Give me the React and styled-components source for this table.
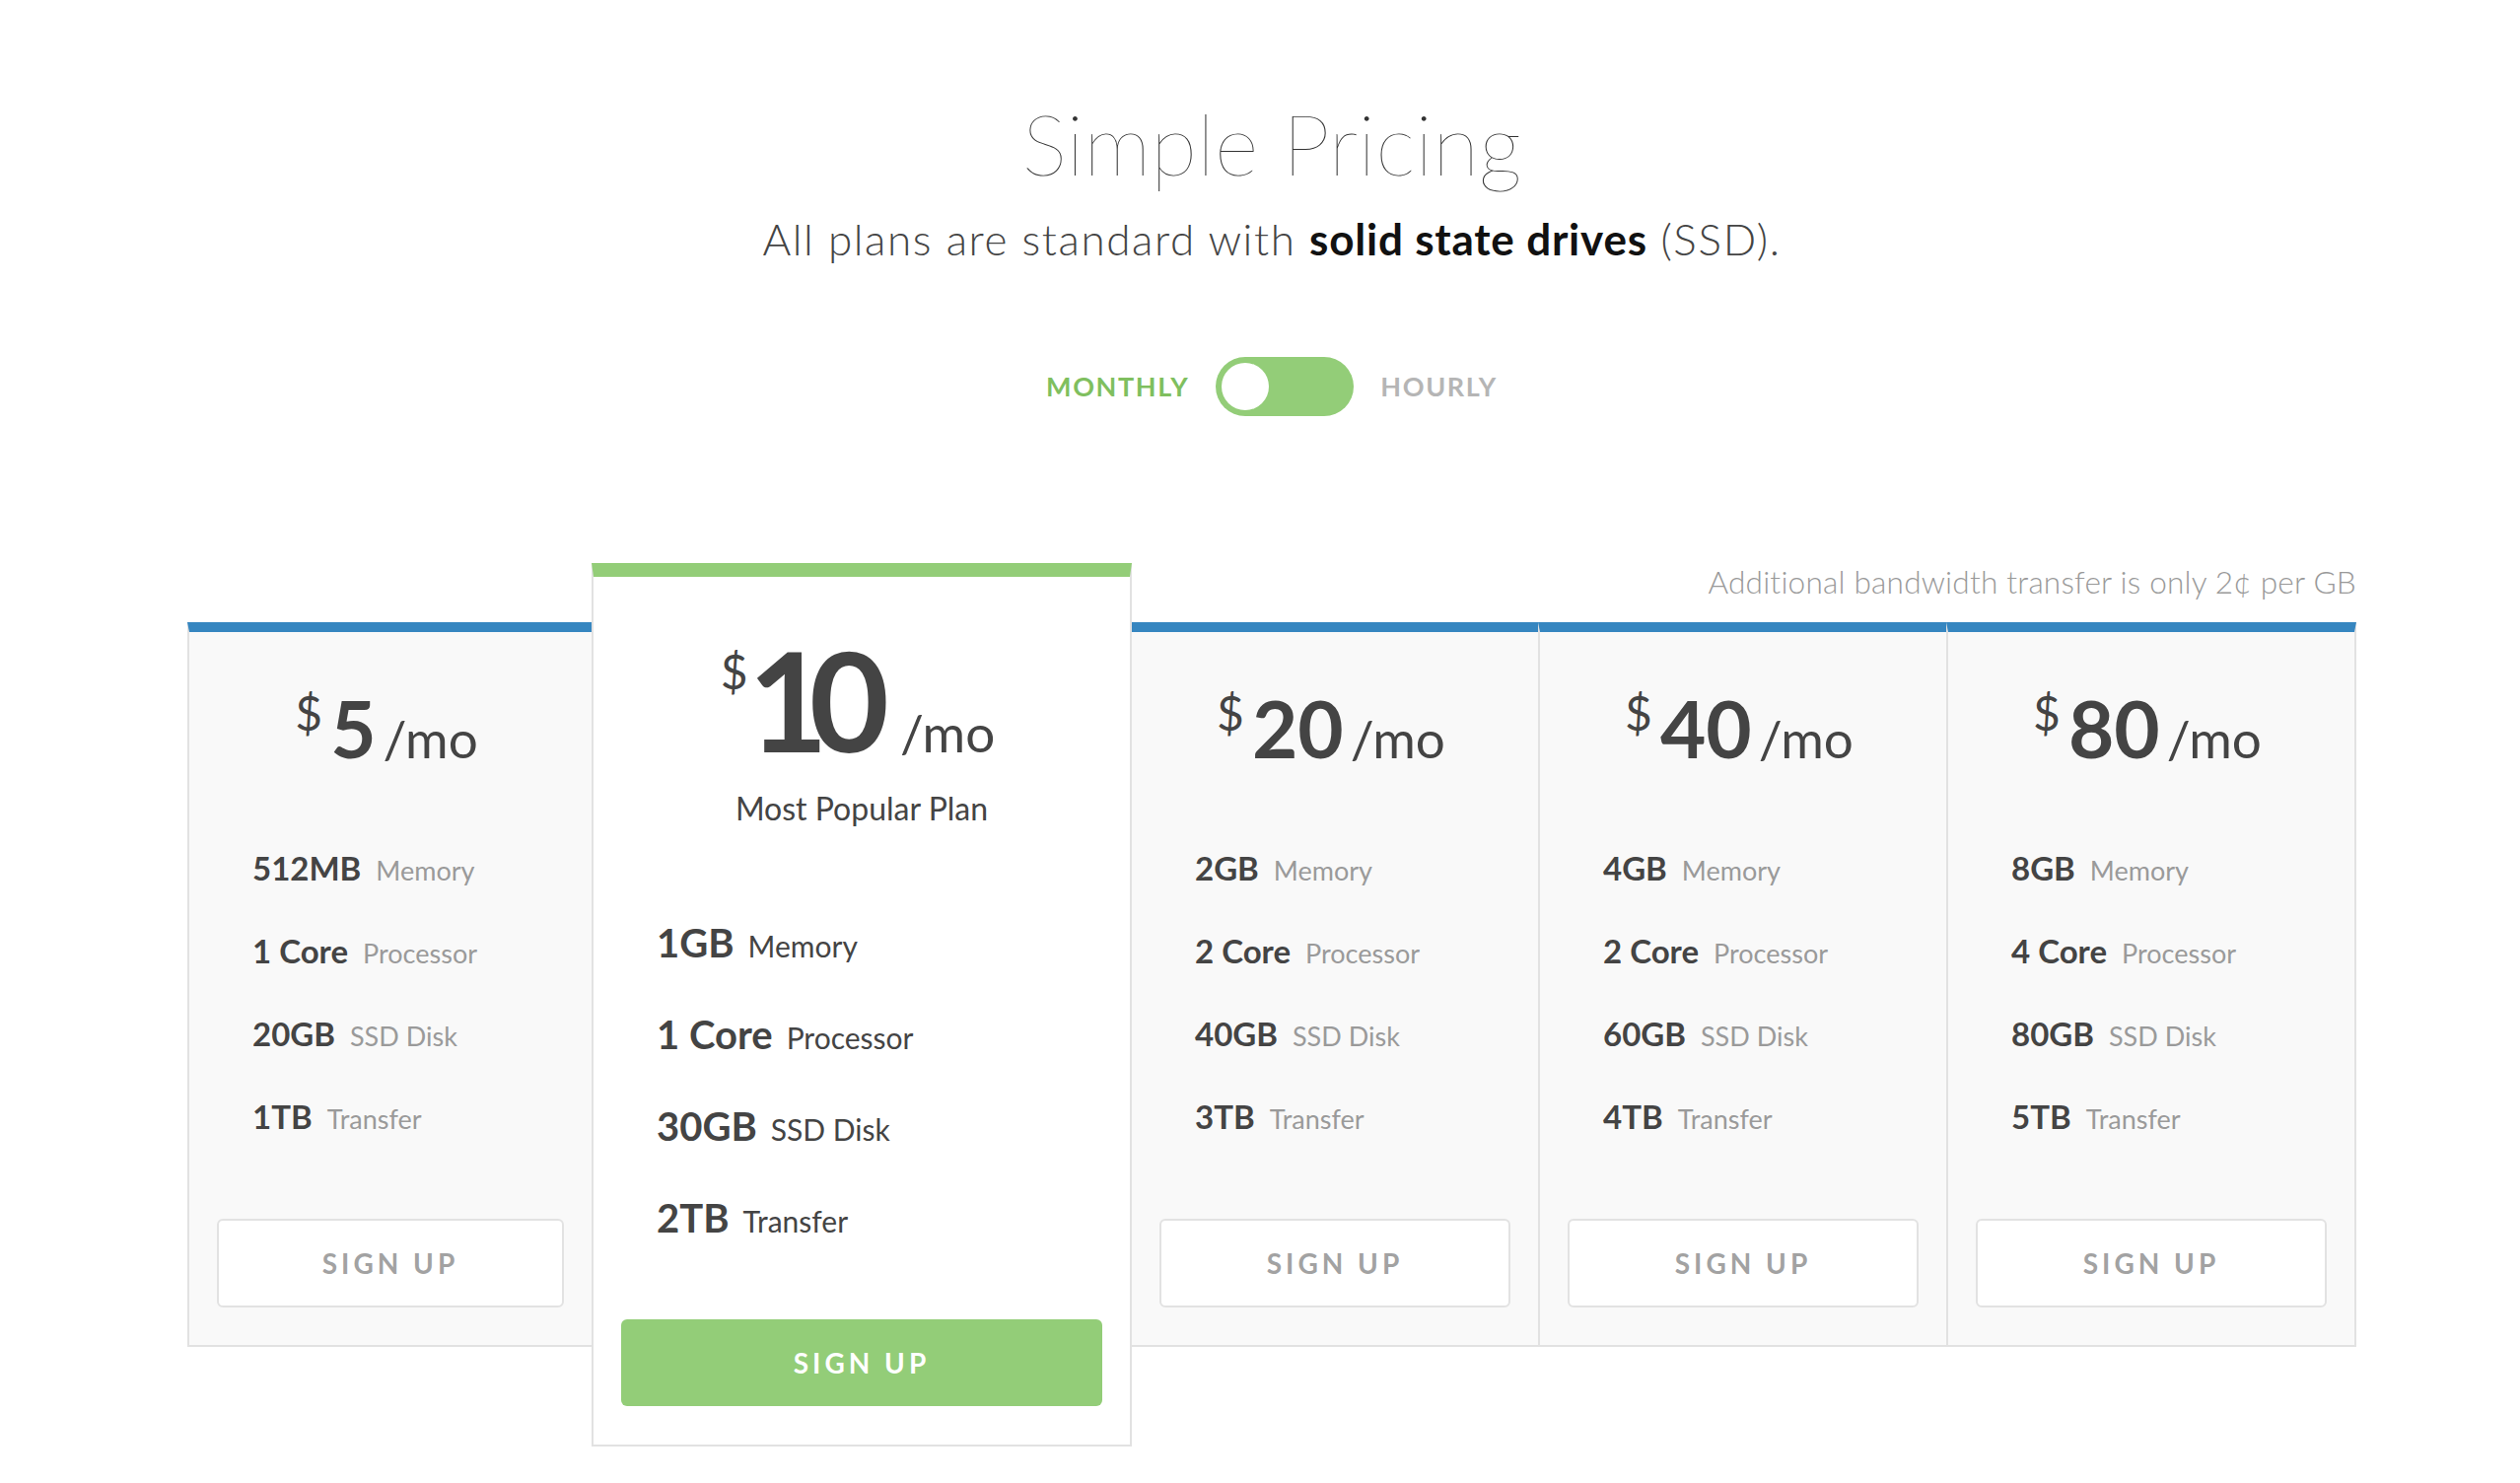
import React from "react";
import styled, { createGlobalStyle } from "styled-components";

const GlobalStyle = createGlobalStyle`
  html, body { margin: 0; padding: 0; background: #ffffff; }
  body { font-family: Lato, "Open Sans", "Liberation Sans", sans-serif; color: #444; }
  * { box-sizing: border-box; }
`;

const GREEN = "#93cd78";
const BLUE = "#3686c0";
const LINE = "#e2e2e2";

const Page = styled.main`
  width: 2200px;
  margin-left: 190px;
  padding-top: 93px;
  padding-bottom: 40px;
`;

const Header = styled.header`
  display: flex;
  flex-direction: column;
  align-items: center;
`;

const Title = styled.h1`
  margin: 0;
  font-size: 86px;
  font-weight: 200;
  line-height: 1.2;
  color: #333;
`;

const Subtitle = styled.p`
  margin: 20px 0 0;
  font-size: 44px;
  font-weight: 300;
  letter-spacing: 1.6px;
  line-height: 1.2;
  color: #444;
  strong { font-weight: 700; color: #111; letter-spacing: 0.8px; }
`;

const ToggleRow = styled.div`
  margin-top: 93px;
  display: flex;
  align-items: center;
  gap: 27px;
`;

const ToggleLabel = styled.span`
  font-size: 27px;
  font-weight: 700;
  letter-spacing: 1.6px;
  color: ${(p) => (p.$active ? "#7fbf5f" : "#b5b5b5")};
`;

const Switch = styled.div`
  width: 140px;
  height: 60px;
  border-radius: 30px;
  background: ${GREEN};
  padding: 6px;
  display: flex;
  justify-content: ${(p) => (p.$on ? "flex-end" : "flex-start")};
`;

const Knob = styled.div`
  width: 48px;
  height: 48px;
  border-radius: 50%;
  background: #fff;
`;

const Plans = styled.section`
  margin-top: 149px;
  display: flex;
  align-items: flex-start;
`;

const RightGroup = styled.div`
  flex: 1 1 0;
  display: flex;
  flex-direction: column;
`;

const Note = styled.div`
  height: 60px;
  padding-top: 1px;
  text-align: right;
  font-size: 31.6px;
  font-weight: 300;
  letter-spacing: 0.2px;
  line-height: 36px;
  color: #999;
`;

const CardsRow = styled.div`
  display: flex;
  align-items: flex-start;
`;

const Card = styled.article`
  flex: ${(p) => (p.$width ? `0 0 ${p.$width}px` : "1 1 0")};
  margin-top: ${(p) => p.$offset || 0}px;
  background: #f9f9f9;
  border-top: 10px solid ${BLUE};
  border-bottom: 2px solid ${LINE};
  border-left: ${(p) => (p.$leftLine ? `2px solid ${LINE}` : "none")};
  border-right: ${(p) => (p.$rightLine ? `2px solid ${LINE}` : "none")};
  padding: 0 28px 38px;
  display: flex;
  flex-direction: column;
`;

const PopularCard = styled.article`
  flex: 0 0 548px;
  background: #fff;
  border: 2px solid ${LINE};
  border-top: 14px solid ${GREEN};
  padding: 0 28px 39px;
  display: flex;
  flex-direction: column;
`;

const PriceRow = styled.div`
  margin-top: ${(p) => p.$top}px;
  padding-right: 8px;
  display: flex;
  justify-content: center;
  align-items: baseline;
  color: #444;
`;

const Currency = styled.span`
  align-self: flex-start;
  margin-top: ${(p) => p.$drop}px;
  margin-right: ${(p) => p.$gap}px;
  font-size: 48px;
  font-weight: 400;
  line-height: 1;
`;

const Amount = styled.span`
  font-size: ${(p) => p.$size}px;
  font-weight: 700;
  line-height: 1;
  letter-spacing: ${(p) => p.$tight || 0}px;
`;

const Period = styled.span`
  margin-left: ${(p) => p.$gap}px;
  font-size: 53px;
  font-weight: 400;
  line-height: 1;
`;

const Tagline = styled.p`
  margin: 22px 0 0;
  text-align: center;
  font-size: 32px;
  font-weight: 400;
  line-height: 1.2;
  color: #444;
`;

const Features = styled.ul`
  list-style: none;
  margin: ${(p) => p.$top}px 0 0;
  padding: 0 0 0 36px;
`;

const Feature = styled.li`
  font-size: ${(p) => (p.$popular ? 40 : 33)}px;
  line-height: ${(p) => (p.$popular ? 93 : 84)}px;
  height: ${(p) => (p.$popular ? 93 : 84)}px;
  white-space: nowrap;
`;

const Value = styled.b`
  font-weight: 700;
  color: #444;
`;

const Label = styled.span`
  margin-left: ${(p) => (p.$popular ? 14 : 15)}px;
  font-size: ${(p) => (p.$popular ? 30 : 27)}px;
  line-height: 1;
  font-weight: 400;
  color: ${(p) => (p.$popular ? "#444" : "#9a9a9a")};
`;

const SignUp = styled.button`
  margin-top: ${(p) => (p.$primary ? 56 : 62)}px;
  width: 100%;
  height: ${(p) => (p.$primary ? 88 : 90)}px;
  border-radius: 6px;
  border: ${(p) => (p.$primary ? "none" : `2px solid ${LINE}`)};
  background: ${(p) => (p.$primary ? GREEN : "#fff")};
  color: ${(p) => (p.$primary ? "#fff" : "#a2a2a2")};
  font-family: inherit;
  font-size: 28px;
  font-weight: 700;
  letter-spacing: 4px;
  cursor: pointer;
`;

const plans = [
  { price: 5, memory: "512MB", cores: "1 Core", disk: "20GB", transfer: "1TB" },
  { price: 10, memory: "1GB", cores: "1 Core", disk: "30GB", transfer: "2TB", popular: true },
  { price: 20, memory: "2GB", cores: "2 Core", disk: "40GB", transfer: "3TB" },
  { price: 40, memory: "4GB", cores: "2 Core", disk: "60GB", transfer: "4TB" },
  { price: 80, memory: "8GB", cores: "4 Core", disk: "80GB", transfer: "5TB" },
];

function FeatureList({ plan, popular }) {
  const rows = [
    [plan.memory, "Memory"],
    [plan.cores, "Processor"],
    [plan.disk, "SSD Disk"],
    [plan.transfer, "Transfer"],
  ];
  return (
    <Features $top={popular ? 71 : 60}>
      {rows.map(([v, l]) => (
        <Feature key={l} $popular={popular}>
          <Value>{v}</Value>
          <Label $popular={popular}>{l}</Label>
        </Feature>
      ))}
    </Features>
  );
}

function RegularCard({ plan, offset, width, leftLine, rightLine }) {
  return (
    <Card $offset={offset} $width={width} $leftLine={leftLine} $rightLine={rightLine}>
      <PriceRow $top={57}>
        <Currency $drop={1} $gap={8}>$</Currency>
        <Amount $size={80}>{plan.price}</Amount>
        <Period $gap={7}>/mo</Period>
      </PriceRow>
      <FeatureList plan={plan} />
      <SignUp>SIGN UP</SignUp>
    </Card>
  );
}

export default function App() {
  const [first, popular, ...rest] = plans;
  return (
    <>
      <GlobalStyle />
      <Page>
        <Header>
          <Title>Simple Pricing</Title>
          <Subtitle>
            All plans are standard with <strong>solid state drives</strong> (SSD).
          </Subtitle>
          <ToggleRow>
            <ToggleLabel $active>MONTHLY</ToggleLabel>
            <Switch>
              <Knob />
            </Switch>
            <ToggleLabel>HOURLY</ToggleLabel>
          </ToggleRow>
        </Header>

        <Plans>
          <RegularCard plan={first} offset={60} width={410} leftLine />
          <PopularCard>
            <PriceRow $top={54}>
              <Currency $drop={18} $gap={0}>$</Currency>
              <Amount $size={140} $tight={-19}>{popular.price}</Amount>
              <Period $gap={30}>/mo</Period>
            </PriceRow>
            <Tagline>Most Popular Plan</Tagline>
            <FeatureList plan={popular} popular />
            <SignUp $primary>SIGN UP</SignUp>
          </PopularCard>
          <RightGroup>
            <Note>Additional bandwidth transfer is only 2¢ per GB</Note>
            <CardsRow>
              {rest.map((p, i) => (
                <RegularCard
                  key={p.price}
                  plan={p}
                  leftLine={i > 0}
                  rightLine={i === rest.length - 1}
                />
              ))}
            </CardsRow>
          </RightGroup>
        </Plans>
      </Page>
    </>
  );
}
